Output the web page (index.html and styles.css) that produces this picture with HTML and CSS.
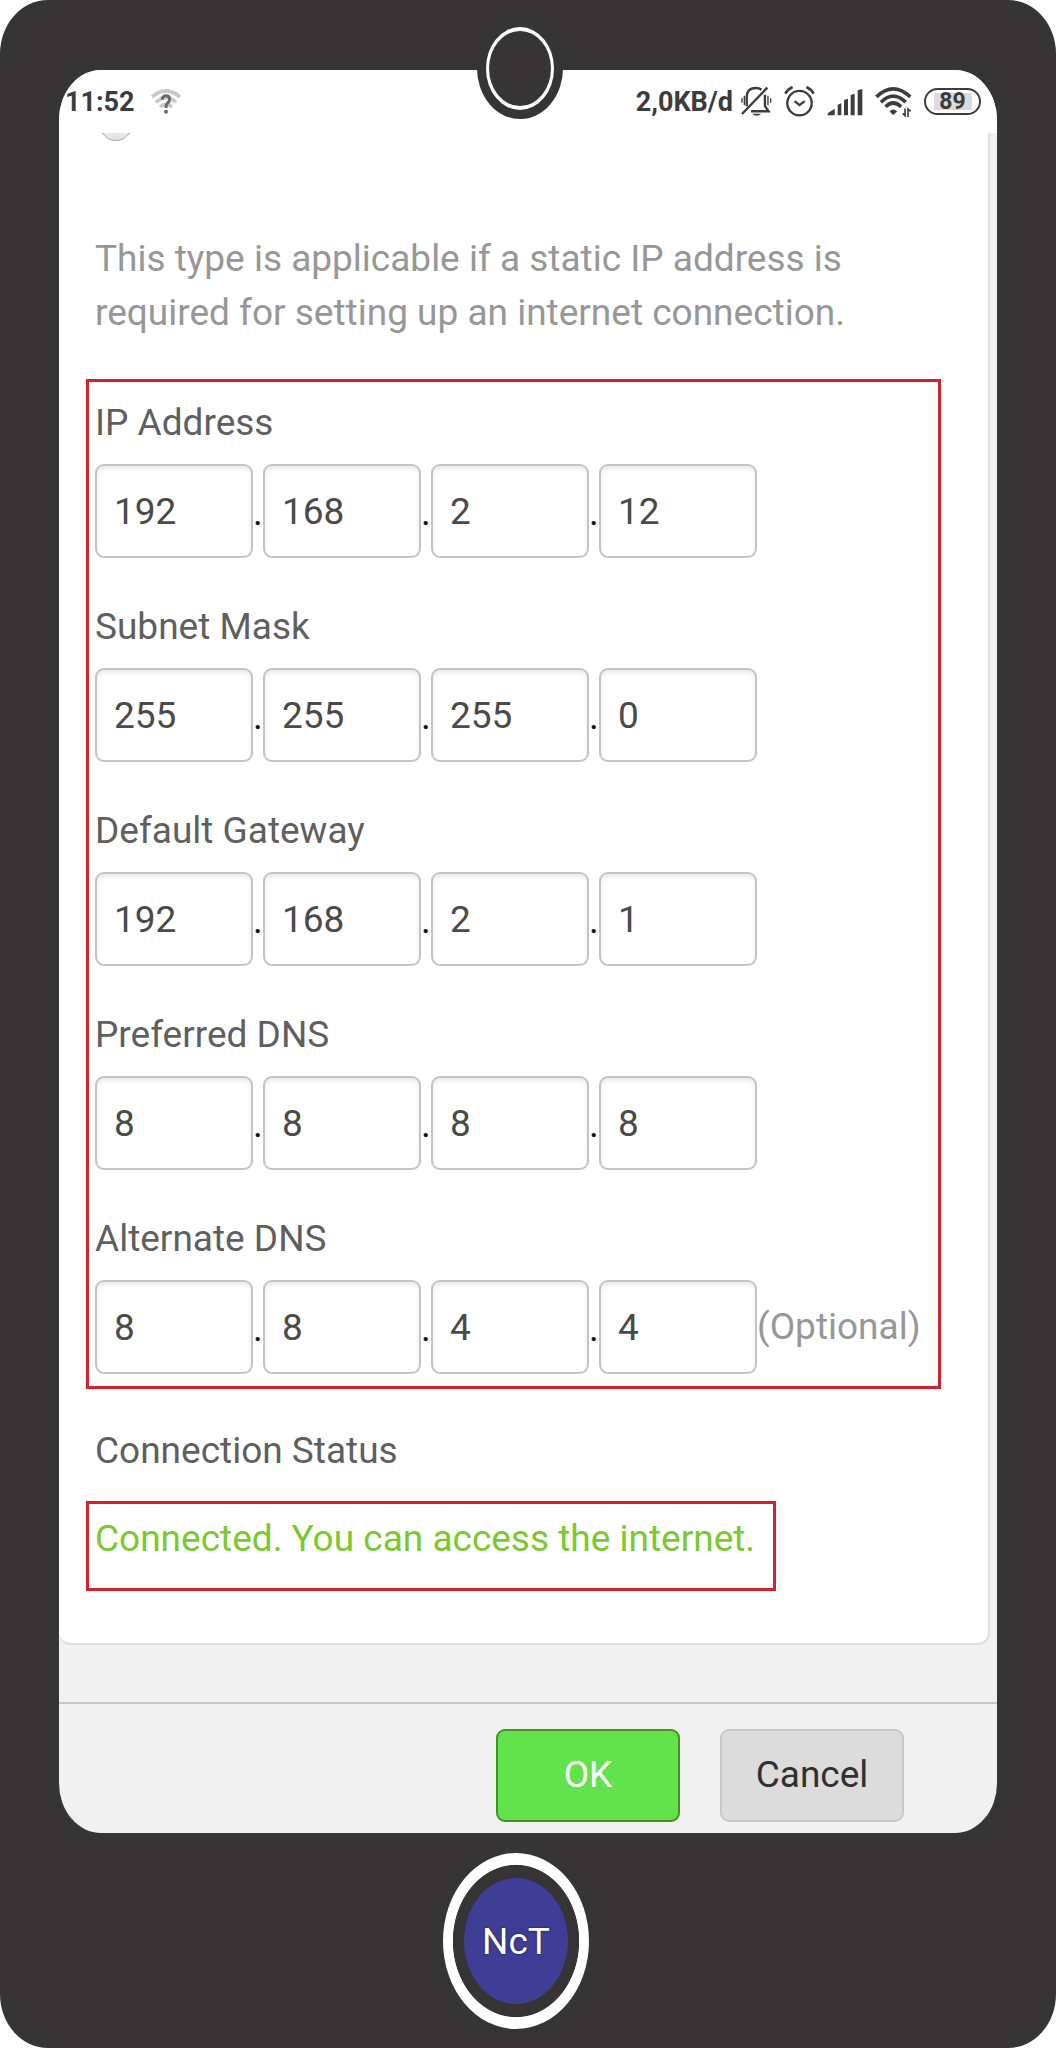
FILE: index.html
```html
<!DOCTYPE html>
<html lang="en">
<head>
    <meta charset="UTF-8">
    <meta name="viewport" content="width=device-width, initial-scale=1.0">
    <title>Static IP</title>
    <link rel="stylesheet" href="styles.css">
</head>
<body>
    <div class="phone">
        <div class="camera"><div class="camera-lens"></div></div>
        <div class="screen">
            <header class="status-bar">
                <span class="clock">11:52</span>
                <svg class="wifi-unknown" width="30" height="26" viewBox="0 0 90 78">
                    <g fill="none" stroke="#c8c8c8" stroke-width="11">
                        <path d="M3 24Q45 -12 87 24"/>
                        <path d="M15 40Q45 12 75 40"/>
                        <path d="M27 54Q45 38 63 54"/>
                    </g>
                    <path d="M34 32Q34 20 45 20Q56 20 56 31Q56 37 50 42Q45 47 45 57" fill="none" stroke="#6a6a6a" stroke-width="9"/>
                    <circle cx="45" cy="68" r="6" fill="#6a6a6a"/>
                </svg>
                <div class="status-icons">
                    <span class="speed">2,0KB/d</span>
                    <svg width="31" height="31" viewBox="0 0 92 92" fill="none" stroke="#3c3c3c" stroke-width="7">
                        <path d="M3 83L78 5"/>
                        <path d="M17 60V34Q17 6 44 6Q54 6 61 11"/>
                        <path d="M71 26V59L82 75H30"/>
                        <path d="M3 36V50M10 29V57M80 29V57M88 36V50" stroke-width="4"/>
                        <path d="M33 82H60Q46 94 33 82Z" fill="#3c3c3c" stroke="none"/>
                    </svg>
                    <svg width="31" height="33" viewBox="0 0 94 98" fill="none" stroke="#3c3c3c" stroke-width="7">
                        <circle cx="47" cy="54" r="37"/>
                        <path d="M32 48L47 60L63 48"/>
                        <path d="M4 25Q11 12 26 5M68 5Q83 12 90 25" stroke-width="8"/>
                    </svg>
                    <svg width="36" height="28" viewBox="0 0 108 84" fill="#3c3c3c">
                        <path d="M2 82V76L23 62V82Z"/>
                        <path d="M32 82V50L43 46V82Z"/>
                        <path d="M51 82V36L63 32V82Z"/>
                        <path d="M71 82V21L83 17V82Z"/>
                        <path d="M92 82V7L106 3V82Z"/>
                    </svg>
                    <svg width="37" height="31" viewBox="0 0 110 94">
                        <g fill="none" stroke="#3c3c3c" stroke-width="11">
                            <path d="M3 33Q54 -16 106 33"/>
                            <path d="M17 49Q54 12 92 49"/>
                            <path d="M31 63Q54 40 78 63"/>
                        </g>
                        <path d="M43 77Q54 65 66 77L54 88Z" fill="#3c3c3c"/>
                        <path d="M90 68V90L83 83M99 94V70L107 77" fill="none" stroke="#3c3c3c" stroke-width="5"/>
                    </svg>
                    <span class="battery">89</span>
                </div>
            </header>

            <main class="page">
                <form class="card" id="wanForm">
                    <div class="type-row">
                        <input type="radio" class="type-radio" name="type" aria-label="Static IP">
                    </div>
                    <p class="hint">This type is applicable if a static IP address is required for setting up an internet connection.</p>

                    <div class="outlined">
                        <div class="field" role="group" aria-labelledby="ip-label">
                            <label id="ip-label" for="ip1">IP Address</label>
                            <div class="octets">
                                <input type="text" id="ip1" value="192"><span class="dot">.</span>
                                <input type="text" aria-label="IP Address 2" value="168"><span class="dot">.</span>
                                <input type="text" aria-label="IP Address 3" value="2"><span class="dot">.</span>
                                <input type="text" aria-label="IP Address 4" value="12">
                            </div>
                        </div>
                        <div class="field" role="group" aria-labelledby="mask-label">
                            <label id="mask-label" for="mask1">Subnet Mask</label>
                            <div class="octets">
                                <input type="text" id="mask1" value="255"><span class="dot">.</span>
                                <input type="text" aria-label="Subnet Mask 2" value="255"><span class="dot">.</span>
                                <input type="text" aria-label="Subnet Mask 3" value="255"><span class="dot">.</span>
                                <input type="text" aria-label="Subnet Mask 4" value="0">
                            </div>
                        </div>
                        <div class="field" role="group" aria-labelledby="gw-label">
                            <label id="gw-label" for="gw1">Default Gateway</label>
                            <div class="octets">
                                <input type="text" id="gw1" value="192"><span class="dot">.</span>
                                <input type="text" aria-label="Default Gateway 2" value="168"><span class="dot">.</span>
                                <input type="text" aria-label="Default Gateway 3" value="2"><span class="dot">.</span>
                                <input type="text" aria-label="Default Gateway 4" value="1">
                            </div>
                        </div>
                        <div class="field" role="group" aria-labelledby="dns-label">
                            <label id="dns-label" for="dns1">Preferred DNS</label>
                            <div class="octets">
                                <input type="text" id="dns1" value="8"><span class="dot">.</span>
                                <input type="text" aria-label="Preferred DNS 2" value="8"><span class="dot">.</span>
                                <input type="text" aria-label="Preferred DNS 3" value="8"><span class="dot">.</span>
                                <input type="text" aria-label="Preferred DNS 4" value="8">
                            </div>
                        </div>
                        <div class="field" role="group" aria-labelledby="alt-label">
                            <label id="alt-label" for="alt1">Alternate DNS</label>
                            <div class="octets">
                                <input type="text" id="alt1" value="8"><span class="dot">.</span>
                                <input type="text" aria-label="Alternate DNS 2" value="8"><span class="dot">.</span>
                                <input type="text" aria-label="Alternate DNS 3" value="4"><span class="dot">.</span>
                                <input type="text" aria-label="Alternate DNS 4" value="4">
                                <span class="optional">(Optional)</span>
                            </div>
                        </div>
                    </div>

                    <h2 class="status-title">Connection Status</h2>
                    <p class="outlined connected">Connected. You can access the internet.</p>
                </form>
            </main>

            <footer class="actions">
                <button type="submit" form="wanForm" class="btn btn-ok">OK</button>
                <button type="button" class="btn btn-cancel">Cancel</button>
            </footer>
        </div>
        <div class="home-row">
            <button type="button" class="home"><span class="home-logo">NcT</span></button>
        </div>
    </div>
</body>
</html>
```
FILE: styles.css
```css
* {
    box-sizing: border-box;
}
body {
    margin: 0;
    background: #fff;
    font-family: Roboto, "Liberation Sans", sans-serif;
    font-size: 37px;
    line-height: 54px;
    color: #5f5f5f;
}
.phone {
    position: relative;
    display: flex;
    flex-direction: column;
    min-height: 100vh;
    padding: 70px 59px 0;
    background: #363435;
    border-radius: 48px / 54px;
}
/* camera hangs over the top edge of the screen */
.camera {
    position: absolute;
    top: 18px;
    left: 50%;
    width: 86px;
    height: 101px;
    margin-left: -51px;
    padding: 9px;
    background: #363435;
    border-radius: 50%;
}
.camera-lens {
    height: 100%;
    border: 3px solid #fff;
    border-top-width: 4px;
    border-bottom-width: 4px;
    border-radius: 50%;
}
.screen {
    display: flex;
    flex-direction: column;
    overflow: hidden;
    background: #f1f1f1;
    border-radius: 42px / 50px;
}
.status-bar {
    display: flex;
    align-items: center;
    height: 63px;
    padding: 0 16px 0 6px;
    background: #fff;
    color: #3c3c3c;
    font-size: 27px;
    font-weight: 700;
}
.wifi-unknown {
    margin-left: 16px;
}
.status-icons {
    display: flex;
    align-items: center;
    gap: 12px;
    margin-left: auto;
}
.speed {
    margin-right: -4px;
}
.battery {
    width: 57px;
    height: 27px;
    border: 2px solid #3c3c3c;
    border-radius: 14px;
    background: linear-gradient(#dcdcdc, #dcdcdc) center / 38px 17px no-repeat;
    font-size: 23px;
    line-height: 24px;
    text-align: center;
}
.page {
    padding: 0 7px 57px 0;
}
.card {
    padding: 0 47px 52px 27px;
    background: #fff;
    border-right: 2px solid #dedede;
    border-bottom: 2px solid #dedede;
    border-radius: 0 0 12px 12px;
}
.type-row {
    display: flex;
    align-items: flex-end;
    height: 8px;
    margin: 0 0 91px 12px;
    overflow: hidden;
}
.type-radio {
    flex: none;
    appearance: none;
    width: 36px;
    height: 42px;
    margin: 0;
    background: #e6e6e6;
    border: 1px solid #aaa;
    border-radius: 50%;
}
.hint {
    max-width: 780px;
    margin: 0 0 39px;
    padding-left: 9px;
    color: #979797;
}
.outlined {
    border: 3px solid #d8202a;
}
.field {
    padding: 14px 0 28px 6px;
}
.field:last-child {
    padding-bottom: 12px;
}
.field label {
    display: block;
    margin-bottom: 14px;
}
.octets {
    display: flex;
}
.octets input {
    width: 158px;
    height: 94px;
    padding: 0 17px;
    border: 2px solid #c4c4c4;
    border-radius: 9px;
    background: #fff;
    box-shadow: inset 0 3px 4px #ececec;
    color: #4a4a4a;
    font: inherit;
}
.dot {
    width: 10px;
    padding-top: 22px;
    color: #111;
    font-size: 37px;
    text-align: center;
}
.optional {
    align-self: center;
    color: #979797;
}
.status-title {
    margin: 35px 0 23px;
    padding-left: 9px;
    font-size: 37px;
    font-weight: 400;
}
.connected {
    width: fit-content;
    margin: 0;
    padding: 8px 18px 22px 6px;
    color: #7ac92f;
}
.actions {
    display: flex;
    justify-content: flex-end;
    gap: 40px;
    padding: 25px 93px 11px 0;
    border-top: 2px solid #c6c6c6;
}
.btn {
    width: 184px;
    height: 93px;
    padding: 0 0 2px;
    border: 2px solid;
    border-radius: 9px;
    font-family: inherit;
    font-size: 37px;
}
.btn-ok {
    background: #62e24d;
    border-color: #449221;
    color: #fff;
}
.btn-cancel {
    background: #dcdcdc;
    border-color: #c8c8c8;
    color: #303030;
}
.home-row {
    display: flex;
    justify-content: center;
    padding: 20px 24px 18px 0;
}
.home {
    width: 146px;
    height: 176px;
    padding: 12px;
    border: 0;
    border-radius: 50%;
    background: radial-gradient(closest-side, #363435 86%, #fff 87%);
}
.home-logo {
    display: flex;
    align-items: center;
    justify-content: center;
    width: 104px;
    height: 126px;
    margin: 0 auto;
    border-radius: 50%;
    background: #3f3d96;
    color: #fff;
    font-family: Roboto, "Liberation Sans", sans-serif;
    font-size: 37px;
    text-shadow: 0 0 2px #111;
}
```
